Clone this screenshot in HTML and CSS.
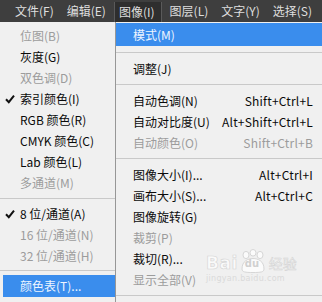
FILE: index.html
```html
<!DOCTYPE html>
<html>
<head>
<meta charset="utf-8">
<link rel="stylesheet" href="styles.css">
</head>
<body>
<div class="screen">
  <div class="menubar">
    <span class="mb-item">文件(F)</span>
    <span class="mb-item">编辑(E)</span>
    <span class="mb-item open">图像(I)</span>
    <span class="mb-item">图层(L)</span>
    <span class="mb-item">文字(Y)</span>
    <span class="mb-item">选择(S)</span>
  </div>
  <div class="menus">
    <div class="submenu">
      <div class="item dis">位图(B)</div>
      <div class="item">灰度(G)</div>
      <div class="item dis">双色调(D)</div>
      <div class="item"><svg class="check" viewBox="0 0 10 10" width="10" height="10"><path d="M1 5.2 L3.8 8.2 L9 1.6" fill="none" stroke="#111" stroke-width="2"/></svg>索引颜色(I)</div>
      <div class="item">RGB 颜色(R)</div>
      <div class="item">CMYK 颜色(C)</div>
      <div class="item">Lab 颜色(L)</div>
      <div class="item dis">多通道(M)</div>
      <div class="sep s1"></div>
      <div class="item"><svg class="check" viewBox="0 0 10 10" width="10" height="10"><path d="M1 5.2 L3.8 8.2 L9 1.6" fill="none" stroke="#111" stroke-width="2"/></svg>8 位/通道(A)</div>
      <div class="item dis">16 位/通道(N)</div>
      <div class="item dis">32 位/通道(H)</div>
      <div class="sep s2"></div>
      <div class="item hl">颜色表(T)...</div>
    </div>
    <div class="dropdown">
      <div class="ditem hl first"><span>模式(M)</span></div>
      <div class="sep d1"></div>
      <div class="ditem"><span>调整(J)</span></div>
      <div class="sep d2"></div>
      <div class="ditem"><span>自动色调(N)</span><span class="sc">Shift+Ctrl+L</span></div>
      <div class="ditem"><span>自动对比度(U)</span><span class="sc">Alt+Shift+Ctrl+L</span></div>
      <div class="ditem dis"><span>自动颜色(O)</span><span class="sc">Shift+Ctrl+B</span></div>
      <div class="sep d2"></div>
      <div class="ditem"><span>图像大小(I)...</span><span class="sc">Alt+Ctrl+I</span></div>
      <div class="ditem"><span>画布大小(S)...</span><span class="sc">Alt+Ctrl+C</span></div>
      <div class="ditem"><span>图像旋转(G)</span></div>
      <div class="ditem dis"><span>裁剪(P)</span></div>
      <div class="ditem"><span>裁切(R)...</span></div>
      <div class="ditem dis"><span>显示全部(V)</span></div>
      <div class="sep d2"></div>
    </div>
  </div>
  <div class="watermark">
    <div class="wm-row">
      <span class="wm-bai">Bai</span>
      <span class="wm-paw">
        <svg viewBox="0 0 28 24" width="28" height="24">
          <g fill="#fbfbfb" stroke="#d6d6d6" stroke-width="1">
            <ellipse cx="7" cy="6" rx="3" ry="3.6"/>
            <ellipse cx="14" cy="3.8" rx="3" ry="3.3"/>
            <ellipse cx="21" cy="6" rx="3" ry="3.6"/>
            <path d="M3 20 C3 12 9 9.5 14 9.5 C19 9.5 25 12 25 20 C25 23 22 23.5 14 23.5 C6 23.5 3 23 3 20 Z"/>
          </g>
        </svg>
        <span class="wm-du">du</span>
      </span>
      <span class="wm-jy">经验</span>
    </div>
    <div class="wm-url">jingyan.baidu.com</div>
  </div>
</div>
</body>
</html>
```
FILE: styles.css
```css
html, body {
  margin: 0;
  padding: 0;
}
.screen {
  position: relative;
  width: 322px;
  height: 302px;
  overflow: hidden;
  background: #f0f0f0;
  font-family: "Noto Sans CJK SC", "Noto Sans", sans-serif;
  font-size: 12px;
}
.menubar {
  height: 22px;
  background: #3e3e3e;
  display: flex;
  align-items: stretch;
  padding-left: 8px;
  box-sizing: border-box;
  overflow: hidden;
}
.mb-item {
  flex: none;
  white-space: nowrap;
  color: #dedede;
  padding: 0 6px 0 7px;
  display: flex;
  align-items: center;
  line-height: 1;
}
.mb-item.open {
  background: #2e2e2e;
  border-left: 1px solid #5a5a5a;
  border-right: 1px solid #5a5a5a;
  margin-top: 2px;
  padding: 0 6px 0 4px;
  margin-left: 2px;
  margin-right: 1px;
}
.menus {
  display: flex;
  height: 280px;
}
.submenu {
  width: 115px;
  flex: none;
  padding-top: 3px;
  box-sizing: border-box;
}
.item {
  height: 21px;
  display: flex;
  align-items: center;
  padding-left: 20px;
  position: relative;
  color: #0a0a0a;
  line-height: 1;
  white-space: nowrap;
}
.item.dis {
  color: #9c9c9c;
}
.item.hl {
  background: #3a8ded;
  color: #eef5ff;
  margin-left: 3px;
  padding-left: 17px;
  height: 22px;
}
.check {
  position: absolute;
  left: 5px;
  top: 6px;
}
.sep {
  display: flex;
  align-items: center;
}
.sep::before {
  content: "";
  display: block;
  width: 100%;
  height: 1px;
  background: #c9c9c9;
}
.sep.s1 { height: 10px; }
.sep.s2 { height: 9px; }
.dropdown {
  flex: 1;
  border-left: 1px solid #979797;
  padding-top: 1px;
  box-sizing: border-box;
}
.ditem {
  height: 21px;
  display: flex;
  align-items: center;
  justify-content: space-between;
  padding: 0 9px 0 17px;
  color: #0a0a0a;
  line-height: 1;
  white-space: nowrap;
}
.ditem.first {
  height: 23px;
}
.ditem.hl {
  background: #3a8ded;
  color: #eef5ff;
}
.ditem.dis {
  color: #9c9c9c;
}
.sc {
  letter-spacing: 0.2px;
}
.sep.d1 { height: 12px; }
.sep.d2 { height: 11px; }
.watermark {
  position: absolute;
  left: 206px;
  top: 247px;
  width: 92px;
  pointer-events: none;
}
.wm-row {
  display: flex;
  align-items: flex-end;
  height: 26px;
}
.wm-bai {
  font-family: "DejaVu Sans", sans-serif;
  font-weight: bold;
  font-size: 17px;
  color: #fafafa;
  line-height: 1;
  -webkit-text-stroke: 0.6px #d4d4d4;
  letter-spacing: 0.5px;
  margin-bottom: 1px;
}
.wm-paw {
  position: relative;
  width: 28px;
  height: 24px;
  margin-left: 1px;
}
.wm-paw svg {
  display: block;
}
.wm-du {
  position: absolute;
  left: 6px;
  top: 10px;
  font-family: "DejaVu Sans", sans-serif;
  font-weight: bold;
  font-size: 10px;
  color: #d0d0d0;
  line-height: 1;
}
.wm-jy {
  font-size: 14px;
  color: #f8f8f8;
  -webkit-text-stroke: 0.5px #d2d2d2;
  line-height: 1;
  margin-left: 2px;
  margin-bottom: 3px;
}
.wm-url {
  font-family: "DejaVu Sans", sans-serif;
  font-size: 8px;
  color: #dadada;
  line-height: 1;
  margin-top: 2px;
  letter-spacing: 0.3px;
}
```
